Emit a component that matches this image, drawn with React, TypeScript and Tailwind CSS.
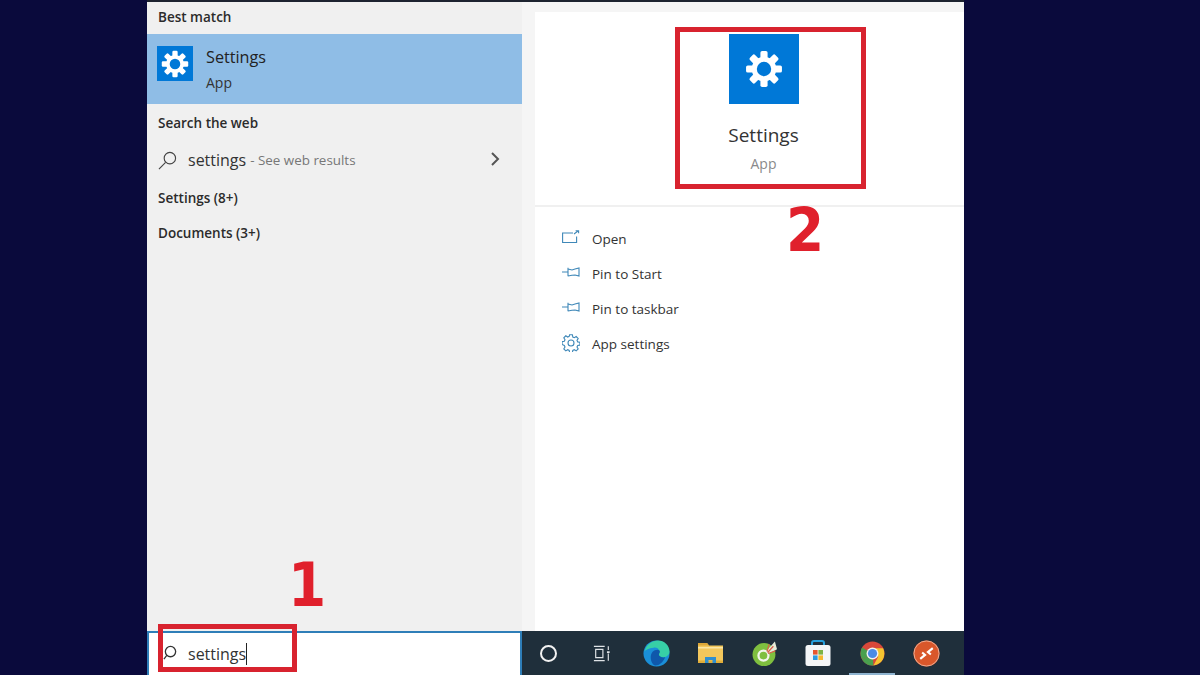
import type { ReactNode } from "react";

const SANS = "font-['Open_Sans','Noto_Sans',sans-serif]";
const DIGIT = "font-['DejaVu_Sans_Condensed','DejaVu_Sans',sans-serif]";

function Gear({ className, hole = "#0078d7" }: { className: string; hole?: string }) {
  const teeth = [0, 45, 90, 135, 180, 225, 270, 315];
  return (
    <svg viewBox="0 0 36 36" className={className}>
      {teeth.map((a) => (
        <rect key={a} x="14.6" y="1" width="6.8" height="8" rx="1.6" fill="#fff" transform={`rotate(${a} 18 18)`} />
      ))}
      <circle cx="18" cy="18" r="11.6" fill="#fff" />
      <circle cx="18" cy="18" r="6.8" fill={hole} />
    </svg>
  );
}

function ActionIcon({ kind }: { kind: "open" | "pin" | "gear" }) {
  if (kind === "open") {
    return (
      <svg viewBox="0 0 18 14" className="-mt-[6px] h-[14px] w-[18px]" fill="none" stroke="#3f88b8" strokeWidth="1.1">
        <path d="M11 3H.6v9.500h14V6.500" />
        <path d="M12 4l4-3M13.600.7h3v2.600" />
      </svg>
    );
  }
  if (kind === "pin") {
    return (
      <svg viewBox="0 0 18 10" className="-mt-[6px] h-[10px] w-[18px]" fill="none" stroke="#3f88b8" strokeWidth="1.1">
        <path d="M0 5h6M6 .8v8.400M6 2l4 1 3-1 4-1v8l-4-1-3 .2-4 .8" />
      </svg>
    );
  }
  return (
    <svg viewBox="0 0 18 18" className="-mt-[4px] h-[18px] w-[18px]" fill="none" stroke="#3f88b8" strokeWidth="1.1">
      <circle cx="9" cy="9" r="3" />
      <path d="M7.600.8h2.800l.4 2.200 1.500.7 1.900-1.200 2 2-1.200 1.900.7 1.500 2.200.4v2.800l-2.200.4-.7 1.500 1.200 1.900-2 2-1.900-1.200-1.500.7-.4 2.200H7.600l-.4-2.200-1.500-.7-1.900 1.200-2-2 1.200-1.900-.7-1.500L.1 10.400V7.600l2.200-.4.7-1.500-1.200-1.900 2-2 1.900 1.200 1.500-.7z" />
    </svg>
  );
}

function Action({ kind, label }: { kind: "open" | "pin" | "gear"; label: string }) {
  return (
    <div className="flex h-[35px] items-center">
      <div className="flex w-[30px] justify-start">
        <ActionIcon kind={kind} />
      </div>
      <span className="text-[13.5px] text-[#333]">{label}</span>
    </div>
  );
}

function Heading({ children, className = "" }: { children: ReactNode; className?: string }) {
  return <div className={`pl-[11px] text-[13.5px] font-semibold leading-[18px] text-[#2b2b2b] ${className}`}>{children}</div>;
}

function TaskSlot({ children, className = "" }: { children: ReactNode; className?: string }) {
  return <div className={`flex h-full w-[52px] shrink-0 items-center justify-center ${className}`}>{children}</div>;
}

function EdgeIcon() {
  return (
    <svg viewBox="0 0 28 28" className="h-[27px] w-[27px]">
      <circle cx="14" cy="14" r="13.5" fill="#1a8fd8" />
      <path d="M1.500 12C3.500 4 10 .5 15.500.5 22 .5 27.500 5.500 27.500 12c0 4-3.500 6-7 6-2.500 0-4.500-1-4.500-2.500 0-1 1-1.500 1-3C17 9 14 7.500 11 8 6 8.500 2.500 10 1.500 12z" fill="#37cfa6" />
      <path d="M8 18c0-5 3-8 7-8 1.500 0 2.500 1 2.500 2 0 1.500-1 2-1 3 0 2 3 3.500 6.500 3-2.500 5.500-6 8.500-10 8.500C10 26.500 8 22 8 18z" fill="#0f58ab" />
    </svg>
  );
}

function FolderIcon() {
  return (
    <svg viewBox="0 0 25 20" className="h-[20px] w-[25px]">
      <path d="M0 0h9l2 2.500h14V20H0z" fill="#f2c75c" />
      <path d="M0 0h9l2 2.500h-11z" fill="#dca738" />
      <rect x="0" y="4" width="25" height="1.500" fill="#fbe6a4" />
      <path d="M0 17.500h25V20H0z" fill="#e2ae3a" />
      <path d="M7 20v-6h11v6h-3.500v-3h-4v3z" fill="#2f8fd0" />
    </svg>
  );
}

function CocIcon() {
  return (
    <svg viewBox="0 0 24 24" className="h-[25px] w-[25px]">
      <circle cx="11.500" cy="13" r="11" fill="#7fbf3f" />
      <circle cx="11" cy="14" r="4.800" fill="#7fbf3f" stroke="#f2f6ea" strokeWidth="2.200" />
      <path d="M13 10.500L22 .5 24 8l-8.500 4.500z" fill="#e6ecd8" />
      <path d="M14.500 10l2-7M15 11l5.500-6M15.500 12l7-2.500" stroke="#d9604a" strokeWidth="1.200" />
    </svg>
  );
}

function StoreIcon() {
  return (
    <svg viewBox="0 0 26 26" className="h-[26px] w-[26px]">
      <path d="M7 6V3A2 2 0 0 1 9 1h8a2 2 0 0 1 2 2v3" fill="none" stroke="#27a0dc" strokeWidth="2" />
      <rect x="0.500" y="5" width="25" height="21" rx="2.500" fill="#f4f6f7" />
      <rect x="8" y="10" width="4.600" height="4.600" fill="#e8572d" />
      <rect x="13.400" y="10" width="4.600" height="4.600" fill="#7db343" />
      <rect x="8" y="15.400" width="4.600" height="4.600" fill="#2d9be0" />
      <rect x="13.400" y="15.400" width="4.600" height="4.600" fill="#f5b82e" />
    </svg>
  );
}

function ChromeIcon() {
  return (
    <svg viewBox="0 0 26 26" className="h-[25px] w-[25px]">
      <circle cx="13" cy="13" r="12.500" fill="#d8483a" />
      <path d="M13 13L2.200 19.200A12.500 12.500 0 0 0 14 25.500z" fill="#4aa04f" />
      <path d="M2.200 6.800L13 13 2.200 19.200A12.500 12.500 0 0 1 2.200 6.800z" fill="#4aa04f" />
      <path d="M13 7.500h11a12.500 12.500 0 0 1-10 18L19 16z" fill="#f4c430" />
      <circle cx="13" cy="13" r="6.200" fill="#f2f2f2" />
      <circle cx="13" cy="13" r="4.800" fill="#4b8be6" />
    </svg>
  );
}

function RemoteIcon() {
  return (
    <svg viewBox="0 0 28 28" className="h-[27px] w-[27px]">
      <circle cx="14" cy="14" r="13.500" fill="#d9572b" />
      <circle cx="14" cy="14" r="13" fill="none" stroke="#efb8a2" strokeWidth="0.900" />
      <path d="M7.500 19.500l5-4-3-2.500M20.500 8.500l-5 4 3 2.500" fill="none" stroke="#fff" strokeWidth="2.200" />
    </svg>
  );
}

export default function App() {
  return (
    <div className={`flex h-[675px] w-[1200px] overflow-hidden bg-[#0a0a3c] pl-[147px] ${SANS}`}>
      <div className="relative flex h-full w-[817px] flex-col border-t-2 border-[#1d2330]">
        <div className="flex min-h-0 flex-1">
          {/* results column */}
          <div className="w-[375px] shrink-0 bg-[#f0f0f0] pt-[6px]">
            <Heading>Best match</Heading>
            <div className="mt-[8px] flex h-[70px] items-start bg-[#8fbde6] pl-[10px] pt-[12px]">
              <div className="flex h-[35px] w-[36px] items-center justify-center bg-[#0078d7]">
                <Gear className="h-[28px] w-[28px]" />
              </div>
              <div className="ml-[13px]">
                <div className="text-[16.2px] font-medium leading-[22px] text-[#222]">Settings</div>
                <div className="mt-[5px] text-[14px] leading-[20px] text-[#333]">App</div>
              </div>
            </div>
            <Heading className="mt-[10px]">Search the web</Heading>
            <div className="mt-[14px] flex h-[28px] items-center pl-[11px] pr-[22px]">
              <svg viewBox="0 0 20 20" className="h-[19px] w-[19px]" fill="none" stroke="#444" strokeWidth="1.200">
                <circle cx="12.500" cy="7.500" r="6" />
                <path d="M8 12l-7 7" />
              </svg>
              <span className="ml-[11px] text-[16px] text-[#333]">settings</span>
              <span className="ml-[4px] mt-[1px] text-[13.4px] text-[#777]">- See web results</span>
              <svg viewBox="0 0 10 14" className="ml-auto -mt-[2px] h-[14px] w-[10px]" fill="none" stroke="#555" strokeWidth="2">
                <path d="M2 1l6 6-6 6" />
              </svg>
            </div>
            <Heading className="mt-[15px]">Settings (8+)</Heading>
            <Heading className="mt-[17px]">Documents (3+)</Heading>
          </div>
          {/* preview column */}
          <div className="flex-1 bg-[#f5f5f5] pl-[13px] pt-[10px]">
            <div className="h-full bg-white">
              <div className="flex h-[195px] flex-col items-center border-b-2 border-[#f0f0f0] pl-[28px] pt-[22px]">
                <div className="flex h-[70px] w-[70px] items-center justify-center bg-[#0078d7]">
                  <Gear className="h-[38px] w-[38px]" />
                </div>
                <div className="mt-[18px] text-[19px] leading-[26px] text-[#333]">Settings</div>
                <div className="mt-[7px] text-[14px] leading-[18px] text-[#8a8a8a]">App</div>
              </div>
              <div className="pl-[27px] pt-[15px]">
                <Action kind="open" label="Open" />
                <Action kind="pin" label="Pin to Start" />
                <Action kind="pin" label="Pin to taskbar" />
                <Action kind="gear" label="App settings" />
              </div>
            </div>
          </div>
        </div>
        {/* search box + taskbar */}
        <div className="flex h-[44px] shrink-0">
          <div className="flex w-[375px] shrink-0 items-center border-2 border-b-0 border-[#2e7eb8] bg-white pl-[14px]">
            <svg viewBox="0 0 16 16" className="-mt-[4px] h-[15px] w-[15px]" fill="none" stroke="#333" strokeWidth="1.400">
              <circle cx="8" cy="7" r="5.500" />
              <path d="M4 11l-3 4" />
            </svg>
            <span className="ml-[10px] border-r border-[#222] text-[16px] leading-[22px] text-[#333]">settings</span>
          </div>
          <div className="flex flex-1 items-center gap-[2px] bg-[#1f2f3b]">
            <TaskSlot>
              <span className="h-[17px] w-[17px] rounded-full border-[2.5px] border-[#f2f2f2]" />
            </TaskSlot>
            <TaskSlot>
              <svg viewBox="0 0 20 18" className="h-[17px] w-[18px]" fill="none" stroke="#dfe3e6" strokeWidth="1.300">
                <path d="M1 1h12M1 17h12M3 4.500h8v9H3zM17 1v4M17 9v8" />
                <path d="M15.500 6.500h3v2h-3z" fill="#dfe3e6" stroke="none" />
              </svg>
            </TaskSlot>
            <TaskSlot><EdgeIcon /></TaskSlot>
            <TaskSlot><FolderIcon /></TaskSlot>
            <TaskSlot><CocIcon /></TaskSlot>
            <TaskSlot><StoreIcon /></TaskSlot>
            <TaskSlot className="relative">
              <ChromeIcon />
              <span className="absolute inset-x-[3px] bottom-0 h-[2px] bg-[#8fb4d0]" />
            </TaskSlot>
            <TaskSlot><RemoteIcon /></TaskSlot>
          </div>
        </div>
        {/* red callouts drawn over the screenshot */}
        <div className="absolute left-[528px] top-[25px] h-[162px] w-[191px] border-[5px] border-[#d8232f]" />
        <div className="absolute left-[11px] top-[622px] h-[48px] w-[139px] border-[5px] border-[#d8232f]" />
        <span className={`absolute left-[639px] top-[194px] text-[61px] font-bold leading-[68px] text-[#e0202c] ${DIGIT}`}>2</span>
        <span className={`absolute left-[141px] top-[549px] text-[61px] font-bold leading-[68px] text-[#e0202c] ${DIGIT}`}>1</span>
      </div>
    </div>
  );
}
